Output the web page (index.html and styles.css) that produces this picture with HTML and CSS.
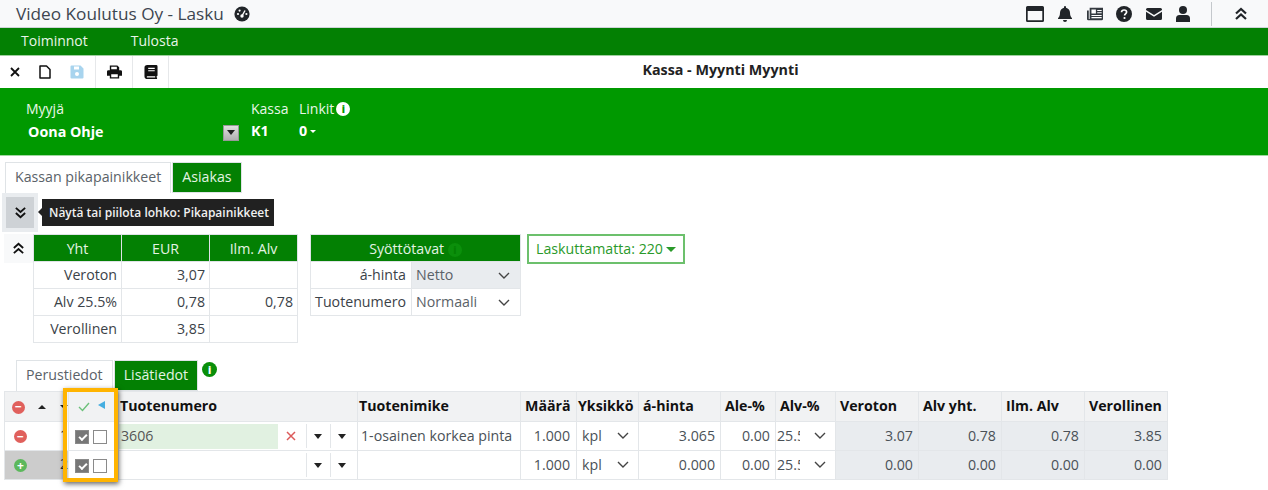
FILE: index.html
```html
<!DOCTYPE html>
<html lang="en">
<head>
  <meta charset="UTF-8" />
  <title>Video Koulutus Oy - Lasku</title>
  <link rel="stylesheet" href="styles.css">
</head>
<body>
  <header class="topbar">
    <div class="topbar-title">
      <span>Video Koulutus Oy - Lasku</span>
      <svg class="gauge" viewBox="0 0 16 16"><circle cx="8" cy="8" r="7.6" fill="#212529"/><circle cx="8" cy="10" r="1.7" fill="#fff"/><path d="M8 10l3-5.5" stroke="#fff" stroke-width="1.4"/><circle cx="4" cy="8" r="1.1" fill="#fff"/><circle cx="5.6" cy="4.6" r="1.1" fill="#fff"/><circle cx="12.4" cy="8" r="1.1" fill="#fff"/></svg>
    </div>
    <div class="topbar-icons">
      <svg class="cal" viewBox="0 0 18 16"><path d="M1.500 0h15A1.500 1.500 0 0 1 18 1.500v13a1.500 1.500 0 0 1-1.500 1.500h-15A1.500 1.500 0 0 1 0 14.500v-13A1.500 1.500 0 0 1 1.500 0zM1.700 5v9.300h14.600V5z" fill="#212529"/></svg>
      <svg viewBox="0 0 14 16"><path d="M7 0a1 1 0 0 1 1 1v.7c2.400.5 4 2.500 4 5 0 3.300 1 4.300 2 5.500v.8H0v-.8c1-1.200 2-2.200 2-5.500 0-2.500 1.600-4.500 4-5V1a1 1 0 0 1 1-1zM5 14h4a2 2 0 0 1-4 0z" fill="#212529"/></svg>
      <svg viewBox="0 0 18 16"><path d="M3 1h15v12.500a1.500 1.500 0 0 1-1.500 1.500H1.500A1.500 1.500 0 0 1 0 13.500V4h2v9.500h1z" fill="#343a40"/><path d="M5 3h5v4.500H5zM11.500 3.500h5v1.200h-5zM11.500 6h5v1.200h-5zM5 9h11.500v1.200H5zM5 11.500h11.500v1.200H5z" fill="#fff"/></svg>
      <svg viewBox="0 0 16 16"><circle cx="8" cy="8" r="8" fill="#212529"/><path d="M5.500 6.200C5.600 4.700 6.700 4 8.100 4c1.500 0 2.500.9 2.500 2.100 0 1.800-2 1.800-2 3.300" fill="none" stroke="#fff" stroke-width="1.700"/><circle cx="8.500" cy="12" r="1.100" fill="#fff"/></svg>
      <svg viewBox="0 0 16 12"><path d="M1.500 0h13A1.500 1.500 0 0 1 16 1.500v.5L8 7 0 2v-.5A1.500 1.500 0 0 1 1.500 0zM0 3.800l8 5 8-5v6.700a1.500 1.500 0 0 1-1.500 1.500h-13A1.500 1.500 0 0 1 0 10.500z" fill="#212529"/></svg>
      <svg viewBox="0 0 14 16"><circle cx="7" cy="4" r="4" fill="#212529"/><path d="M3.500 9h7A3.500 3.500 0 0 1 14 12.500V16H0v-3.500A3.500 3.500 0 0 1 3.500 9z" fill="#212529"/></svg>
      <span class="topbar-sep"></span>
      <svg class="chev" viewBox="0 0 14 14"><path d="M2 6.500l5-4.500 5 4.500M2 12l5-4.500 5 4.500" fill="none" stroke="#212529" stroke-width="2.200"/></svg>
    </div>
  </header>

  <nav class="menu">
    <a>Toiminnot</a>
    <a>Tulosta</a>
  </nav>

  <div class="toolbar">
    <div class="tool-group first">
      <svg class="tool-x" viewBox="0 0 10 10"><path d="M1 1l8 8M9 1l-8 8" stroke="#111" stroke-width="1.800"/></svg>
      <svg class="tool" viewBox="0 0 12 14"><path d="M1 1h6.500L11 4.500V13H1z" fill="#fff" stroke="#111" stroke-width="1.500" stroke-linejoin="round"/></svg>
      <svg class="tool" viewBox="0 0 14 14"><path d="M1.500 0.500h9l3 3v9a1 1 0 0 1-1 1h-11a1 1 0 0 1-1-1v-11a1 1 0 0 1 1-1z" fill="#a8d4ee"/><path d="M4 1.500h5v3H4z" fill="#fff"/><circle cx="7" cy="9" r="2" fill="#fff"/></svg>
    </div>
    <div class="tool-group">
      <svg class="tool wide" viewBox="0 0 16 14"><path d="M3 0h8l2 2v3H3zM1.500 5h13A1.500 1.500 0 0 1 16 6.500V11h-3v3H3v-3H0V6.500A1.500 1.500 0 0 1 1.500 5z" fill="#111"/><path d="M4.500 1.500h6v2.500h-6zM4.500 9.500h7v3h-7z" fill="#fff"/></svg>
    </div>
    <div class="tool-group">
      <svg class="tool" viewBox="0 0 14 15"><path d="M3 0h9.500A1.500 1.500 0 0 1 14 1.500V11a1 1 0 0 1-1 1v1.500h.5v1.500H3a3 3 0 0 1-3-3V3a3 3 0 0 1 3-3z" fill="#111"/><path d="M4 3h7v1.300H4zM4 5.500h7v1.300H4zM3 12h8.500v1.500H3a.8.8 0 0 1 0-1.500z" fill="#fff"/></svg>
    </div>
    <div class="toolbar-title">Kassa - Myynti Myynti</div>
  </div>

  <section class="sale-panel">
    <div class="seller">
      <div class="panel-label">Myyjä</div>
      <div class="seller-row">
        <b class="seller-name">Oona Ohje</b>
        <span class="seller-drop"></span>
      </div>
    </div>
    <div class="register">
      <div class="panel-label">Kassa</div>
      <b>K1</b>
    </div>
    <div class="links">
      <div class="panel-label">Linkit <span class="info-dot white">i</span></div>
      <b>0<span class="caret-small"></span></b>
    </div>
  </section>

  <div class="tabs top-tabs">
    <div class="tab active">Kassan pikapainikkeet</div>
    <div class="tab">Asiakas</div>
  </div>

  <div class="toggle-row">
    <div class="toggle-btn">
      <svg viewBox="0 0 14 14"><path d="M2 2l5 4.500L12 2M2 7.500L7 12l5-4.500" fill="none" stroke="#111" stroke-width="2"/></svg>
    </div>
    <div class="tooltip">Näytä tai piilota lohko: Pikapainikkeet</div>
  </div>

  <div class="summary">
    <div class="collapse-btn">
      <svg viewBox="0 0 14 14"><path d="M2 6.500l5-4.500 5 4.500M2 12l5-4.500 5 4.500" fill="none" stroke="#111" stroke-width="2"/></svg>
    </div>
    <table class="totals">
      <tr><th>Yht</th><th>EUR</th><th>Ilm. Alv</th></tr>
      <tr><td>Veroton</td><td>3,07</td><td></td></tr>
      <tr><td>Alv 25.5%</td><td>0,78</td><td>0,78</td></tr>
      <tr><td>Verollinen</td><td>3,85</td><td></td></tr>
    </table>
    <table class="modes">
      <colgroup><col class="c-mode-label"><col></colgroup>
      <tr><th colspan="2">Syöttötavat <span class="info-dot ghost">i</span></th></tr>
      <tr><td class="mode-label">á-hinta</td><td class="mode-select grey">Netto<svg class="chevron" viewBox="0 0 12 7"><path d="M1 1l5 5 5-5" fill="none" stroke="#444" stroke-width="1.400"/></svg></td></tr>
      <tr><td class="mode-label">Tuotenumero</td><td class="mode-select">Normaali<svg class="chevron" viewBox="0 0 12 7"><path d="M1 1l5 5 5-5" fill="none" stroke="#444" stroke-width="1.400"/></svg></td></tr>
    </table>
    <div class="unbilled">Laskuttamatta: 220<span class="caret-green"></span></div>
  </div>

  <div class="tabs row-tabs">
    <div class="tab active">Perustiedot</div>
    <div class="tab">Lisätiedot</div>
    <span class="info-dot green">i</span>
  </div>

  <div class="grid-wrap">
    <table class="grid">
      <colgroup>
        <col class="c-tools"><col class="c-checks"><col class="c-code"><col class="c-name"><col class="c-qty"><col class="c-unit"><col class="c-price"><col class="c-disc"><col class="c-vat"><col class="c-sum"><col class="c-sum"><col class="c-sum"><col class="c-sum">
      </colgroup>
      <tr class="head">
        <th class="tools-cell">
          <span class="round red small">&minus;</span>
          <span class="mini-up"></span>
          <span class="mini-down"></span>
        </th>
        <th class="checks-head">
          <svg class="ok" viewBox="0 0 12 10"><path d="M1 5l3.500 3.500L11 1" fill="none" stroke="#6cc07a" stroke-width="1.400"/></svg>
          <span class="left-tri"></span>
        </th>
        <th class="tight">Tuotenumero</th>
        <th class="tight">Tuotenimike</th>
        <th>Määrä</th>
        <th class="tight">Yksikkö</th>
        <th>á-hinta</th>
        <th>Ale-%</th>
        <th>Alv-%</th>
        <th>Veroton</th>
        <th>Alv yht.</th>
        <th>Ilm. Alv</th>
        <th>Verollinen</th>
      </tr>
      <tr>
        <td class="tools-cell">
          <span class="round red">&minus;</span>
          <span class="row-no">1</span>
        </td>
        <td class="checks"><span class="box on"></span><span class="box"></span></td>
        <td class="code-cell">
          <div class="code-wrap">
            <span class="code-input filled">3606</span>
            <svg class="clear" viewBox="0 0 10 10"><path d="M1 1l8 8M9 1l-8 8" stroke="#dc5a5a" stroke-width="1.500"/></svg>
            <span class="code-drop"><i></i></span>
            <span class="code-drop"><i></i></span>
          </div>
        </td>
        <td>1-osainen korkea pinta</td>
        <td class="num qty">1.000</td>
        <td class="sel">kpl<svg class="chevron" viewBox="0 0 12 7"><path d="M1 1l5 5 5-5" fill="none" stroke="#444" stroke-width="1.400"/></svg></td>
        <td class="num">3.065</td>
        <td class="num">0.00</td>
        <td class="sel vat"><span class="vat-val">25.5</span><svg class="chevron" viewBox="0 0 12 7"><path d="M1 1l5 5 5-5" fill="none" stroke="#444" stroke-width="1.400"/></svg></td>
        <td class="num sum">3.07</td>
        <td class="num sum">0.78</td>
        <td class="num sum">0.78</td>
        <td class="num sum">3.85</td>
      </tr>
      <tr>
        <td class="tools-cell add">
          <span class="round green-add">+</span>
          <span class="row-no">2</span>
        </td>
        <td class="checks"><span class="box on"></span><span class="box"></span></td>
        <td class="code-cell">
          <div class="code-wrap">
            <span class="code-input"></span>
            <span class="clear-space"></span>
            <span class="code-drop"><i></i></span>
            <span class="code-drop"><i></i></span>
          </div>
        </td>
        <td></td>
        <td class="num qty">1.000</td>
        <td class="sel">kpl<svg class="chevron" viewBox="0 0 12 7"><path d="M1 1l5 5 5-5" fill="none" stroke="#444" stroke-width="1.400"/></svg></td>
        <td class="num">0.000</td>
        <td class="num">0.00</td>
        <td class="sel vat"><span class="vat-val">25.5</span><svg class="chevron" viewBox="0 0 12 7"><path d="M1 1l5 5 5-5" fill="none" stroke="#444" stroke-width="1.400"/></svg></td>
        <td class="num sum">0.00</td>
        <td class="num sum">0.00</td>
        <td class="num sum">0.00</td>
        <td class="num sum">0.00</td>
      </tr>
    </table>
    <!-- highlight drawn over the checkbox column -->
    <div class="highlight">
    </div>
  </div>
</body>
</html>
```

FILE: styles.css
```css
* {
  margin: 0;
  padding: 0;
  box-sizing: border-box;
}

html, body {
  height: 490px;
  overflow: hidden;
}

body {
  background-color: #ffffff;
  color: #343a40;
  font-family: 'Open Sans', sans-serif;
  font-size: 14.200px;
}

/* top bar */
.topbar {
  height: 28px;
  background-color: #f8f9fa;
  border-bottom: 1px solid #cfd4d8;
  display: flex;
  justify-content: space-between;
  align-items: center;
  padding: 0 16px;
}

.topbar-title {
  display: flex;
  align-items: center;
  gap: 10px;
  font-size: 17.200px;
  color: #3d4650;
}

.gauge {
  width: 16px;
  height: 16px;
}

.topbar-icons {
  display: flex;
  align-items: center;
  gap: 13.500px;
  height: 27px;
}

.topbar-icons svg {
  width: 16px;
  height: 16px;
}

.topbar-icons .cal {
  width: 18px;
}

.topbar-sep {
  width: 1px;
  height: 24px;
  background-color: #c4c8cc;
  margin: 0 9px 0 6px;
}

.topbar-icons .chev {
  width: 14px;
  height: 14px;
  margin-right: 4px;
}

/* menu */
.menu {
  height: 28px;
  background-color: #038003;
  border-bottom: 1px solid #9fd09f;
  display: flex;
  align-items: center;
  padding-left: 21px;
  padding-bottom: 2px;
  gap: 43px;
  color: #e8f5e8;
  font-size: 14px;
}

/* toolbar */
.toolbar {
  height: 32px;
  display: flex;
  align-items: center;
  background-color: #fff;
}

.tool-group {
  height: 32px;
  display: flex;
  align-items: center;
  gap: 20px;
  padding: 0 10px 0 11px;
  border-right: 1px solid #e6e8ea;
}

.tool-group.first {
  padding-left: 10px;
  gap: 18px;
  width: 96px;
}

.tool-x {
  width: 10px;
  height: 10px;
}

.tool {
  width: 14px;
  height: 14px;
}

.tool.wide {
  width: 15px;
}

.toolbar-title {
  flex: 1;
  text-align: center;
  font-size: 14.300px;
  font-weight: 700;
  color: #222;
  padding-left: 4px;
  padding-bottom: 6px;
}

/* sale panel */
.sale-panel {
  height: 68px;
  background-color: #009900;
  border-bottom: 1px solid #9fd89f;
  display: flex;
  color: #e8f7e8;
  padding: 13px 0 0 26px;
  font-size: 14px;
}

.panel-label {
  font-size: 14px;
  line-height: 16px;
  margin-bottom: 4px;
  display: flex;
  align-items: center;
  gap: 2px;
}

.sale-panel b {
  color: #fff;
  font-weight: 700;
  font-size: 14.300px;
}

.seller {
  width: 225px;
}

.seller-row {
  display: flex;
  justify-content: space-between;
  align-items: center;
  padding: 1px 12px 0 2px;
}

.seller-drop {
  width: 16px;
  height: 16px;
  margin-top: 2px;
  background: linear-gradient(#e0e0e0, #b0b0b0);
  border: 1px solid #999;
  display: flex;
  align-items: center;
  justify-content: center;
}

.seller-drop::after {
  content: "";
  border-left: 4px solid transparent;
  border-right: 4px solid transparent;
  border-top: 5px solid #222;
}

.register {
  width: 48px;
}

.links {
  width: 70px;
}

.caret-small {
  display: inline-block;
  margin-left: 3px;
  vertical-align: 3px;
  border-left: 3px solid transparent;
  border-right: 3px solid transparent;
  border-top: 3px solid #fff;
}

.info-dot {
  display: inline-flex;
  align-items: center;
  justify-content: center;
  width: 14px;
  height: 14px;
  border-radius: 50%;
  font-size: 10px;
  font-weight: 800;
  line-height: 1;
}

.info-dot.white {
  background-color: #fff;
  color: #009900;
}

.info-dot.ghost {
  background-color: #0b8f0b;
  color: #038003;
}

.info-dot.green {
  width: 15px;
  height: 15px;
  background-color: #0a8f0a;
  color: #fff;
  margin: 2px 0 0 3px;
}

/* tabs */
.tabs {
  display: flex;
  align-items: flex-start;
  gap: 1px;
}

.top-tabs {
  height: 31px;
  margin: 6px 0 0 5px;
}

.row-tabs {
  height: 31px;
  margin: 18px 0 0 16px;
}

.tab {
  height: 31px;
  padding: 0 9px;
  line-height: 27px;
  font-size: 14.200px;
  background-color: #038003;
  color: #e4f4e4;
  border: 1px solid #dfe3e6;
}

.tab.active {
  background-color: #fff;
  color: #5a6268;
  border-bottom: none;
}

/* block toggle */
.toggle-row {
  height: 39px;
  display: flex;
  align-items: center;
  padding-left: 2px;
  gap: 8px;
}

.toggle-btn {
  width: 36px;
  height: 39px;
  border: 4px solid #e9ecef;
  background-color: #ced2d6;
  display: flex;
  align-items: center;
  justify-content: center;
}

.toggle-btn svg {
  width: 13px;
  height: 13px;
}

.tooltip {
  position: relative;
  height: 27px;
  width: 232px;
  background-color: #212121;
  color: #f0f0f0;
  font-size: 12px;
  font-weight: 600;
  line-height: 27px;
  padding-left: 7px;
  white-space: nowrap;
  margin-left: -4px;
}

.tooltip::before {
  content: "";
  position: absolute;
  left: -4px;
  top: 9px;
  border-top: 4px solid transparent;
  border-bottom: 4px solid transparent;
  border-right: 4px solid #212121;
}

/* summary tables */
.summary {
  height: 108px;
  display: flex;
  align-items: flex-start;
  padding-left: 4px;
  margin-top: 2px;
}

.collapse-btn {
  width: 29px;
  height: 29px;
  background-color: #f8f9fa;
  display: flex;
  align-items: center;
  justify-content: center;
}

.collapse-btn svg {
  width: 13px;
  height: 13px;
}

.totals,
.modes {
  border-collapse: collapse;
  table-layout: fixed;
  font-size: 14.200px;
}

.totals th,
.modes th {
  height: 27px;
  background-color: #038003;
  color: #e4f4e4;
  font-weight: 400;
  text-align: center;
  border: 1px solid #dfe3e6;
}

.totals td,
.modes td {
  height: 27px;
  border: 1px solid #e3e6e9;
  text-align: right;
  padding: 0 4px 2px;
  color: #3b4248;
  white-space: nowrap;
}

.totals {
  width: 265px;
}

.modes {
  width: 211px;
  margin-left: 12px;
}

.c-mode-label {
  width: 101px;
}

.modes .mode-label {
  padding-right: 5px;
}

.modes .mode-select {
  text-align: left;
  color: #5a6268;
  padding-left: 4px;
  position: relative;
}

.modes .mode-select.grey {
  background-color: #e9ecef;
}

.mode-select .chevron {
  position: absolute;
  right: 10px;
  top: 10px;
}

.chevron {
  width: 12px;
  height: 7px;
}

.unbilled {
  margin-left: 6px;
  width: 158px;
  height: 30px;
  border: 2px solid #6cc06c;
  color: #2a9a2a;
  font-size: 14.200px;
  line-height: 26px;
  text-align: center;
  white-space: nowrap;
}

.caret-green {
  display: inline-block;
  margin-left: 3px;
  vertical-align: 2px;
  border-left: 5px solid transparent;
  border-right: 5px solid transparent;
  border-top: 5px solid #2a9a2a;
}

/* rows grid */
.grid-wrap {
  position: relative;
  margin-left: 4px;
  width: 1164px;
}

.grid {
  width: 1163px;
  border-collapse: collapse;
  table-layout: fixed;
  font-size: 14.200px;
}

.c-tools { width: 64px; }
.c-checks { width: 50px; }
.c-code { width: 239px; }
.c-name { width: 163px; }
.c-qty { width: 56px; }
.c-unit { width: 62px; }
.c-price { width: 82px; }
.c-disc { width: 55px; }
.c-vat { width: 60px; }
.c-sum { width: 83px; }

.grid th,
.grid td {
  border: 1px solid #e3e6e9;
  white-space: nowrap;
  overflow: hidden;
}

.grid th {
  height: 30px;
  background-color: #f1f2f3;
  color: #111;
  font-weight: 700;
  text-align: left;
  padding: 0 4px 3px;
}

.grid th.tight {
  padding: 0 1px 3px;
}

.grid td {
  height: 29px;
  padding: 0 3px 2px;
  color: #4a5157;
}

.grid td.num {
  text-align: right;
  padding-right: 5px;
}

.grid td.qty {
  padding-right: 6px;
}

.grid td.sum {
  background-color: #e9ecef;
}

.grid td.sel {
  position: relative;
  padding-left: 5px;
}

.sel .chevron {
  position: absolute;
  right: 9px;
  top: 10px;
}

.vat-val {
  display: inline-block;
  width: 23px;
  overflow: hidden;
  vertical-align: bottom;
}

.grid td.vat {
  padding-left: 1px;
}

.grid th.tools-cell,
.grid td.tools-cell {
  padding: 0 0 2px 7px;
  position: relative;
}

.grid td.add {
  background-color: #cccccc;
}

.round {
  display: inline-flex;
  width: 13px;
  height: 13px;
  border-radius: 50%;
  align-items: center;
  justify-content: center;
  font-size: 12px;
  font-weight: 700;
  line-height: 1;
  color: #fff;
  vertical-align: middle;
  margin-left: 2px;
}

.round.red {
  background-color: #e0605c;
}

.round.small {
  margin-left: 0;
}

.round.green-add {
  background-color: #5cb85c;
}

.row-no {
  position: absolute;
  right: 0;
  top: 3px;
  color: #333;
}

.mini-up,
.mini-down {
  display: inline-block;
  vertical-align: middle;
  border-left: 4px solid transparent;
  border-right: 4px solid transparent;
}

.mini-up {
  border-bottom: 4px solid #222;
  margin-left: 9px;
}

.mini-down {
  border-top: 4px solid #222;
  margin-left: 11px;
}

.grid th.checks-head {
  padding: 0 0 3px 9px;
}

.ok {
  width: 12px;
  height: 10px;
  vertical-align: middle;
}

.left-tri {
  display: inline-block;
  vertical-align: 2px;
  margin-left: 4px;
  border-top: 4.500px solid transparent;
  border-bottom: 4.500px solid transparent;
  border-right: 7px solid #45aee0;
}

.grid td.checks {
  padding: 0 0 2px 6px;
}

.box {
  display: inline-block;
  width: 14px;
  height: 14px;
  border: 1px solid #8a8a8a;
  background-color: #fff;
  vertical-align: middle;
  margin-right: 4px;
}

.box.on {
  background-color: #777;
  position: relative;
}

.box.on::after {
  content: "";
  position: absolute;
  left: 3px;
  top: 3px;
  width: 6px;
  height: 3px;
  border-left: 2px solid #fff;
  border-bottom: 2px solid #fff;
  transform: rotate(-45deg);
}

.grid td.code-cell {
  padding: 0;
}

.code-wrap {
  display: flex;
  align-items: center;
  height: 28px;
}

.code-input {
  width: 159px;
  height: 25px;
  padding-left: 2px;
  line-height: 23px;
  color: #555;
}

.code-input.filled {
  background-color: #e1f1e1;
}

.clear {
  width: 10px;
  height: 10px;
  margin: 0 10px 0 8px;
}

.clear-space {
  width: 28px;
}

.code-drop {
  width: 24px;
  height: 24px;
  padding-right: 2px;
  border-left: 1px solid #e3e6e9;
  display: flex;
  align-items: center;
  justify-content: center;
}

.code-drop i {
  border-left: 4.500px solid transparent;
  border-right: 4.500px solid transparent;
  border-top: 5px solid #222;
}

.highlight {
  position: absolute;
  left: 59px;
  top: -3px;
  width: 55px;
  height: 94px;
  border: 4px solid #ffb400;
  box-shadow: 1px 2px 5px rgba(0, 0, 0, 0.6);
}
```
